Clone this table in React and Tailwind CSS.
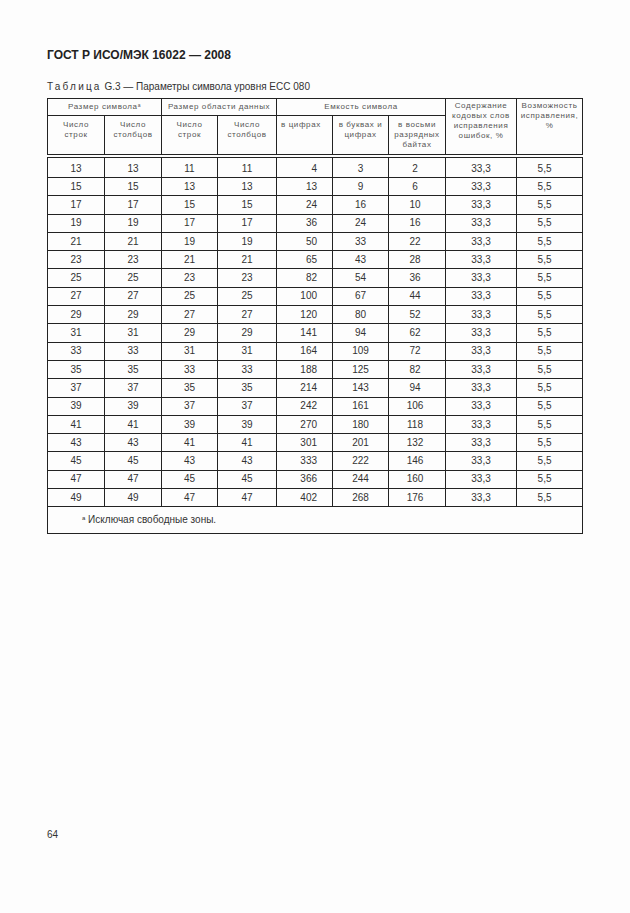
const rows = [
  [13, 11, 4, 3, 2],
  [15, 13, 13, 9, 6],
  [17, 15, 24, 16, 10],
  [19, 17, 36, 24, 16],
  [21, 19, 50, 33, 22],
  [23, 21, 65, 43, 28],
  [25, 23, 82, 54, 36],
  [27, 25, 100, 67, 44],
  [29, 27, 120, 80, 52],
  [31, 29, 141, 94, 62],
  [33, 31, 164, 109, 72],
  [35, 33, 188, 125, 82],
  [37, 35, 214, 143, 94],
  [39, 37, 242, 161, 106],
  [41, 39, 270, 180, 118],
  [43, 41, 301, 201, 132],
  [45, 43, 333, 222, 146],
  [47, 45, 366, 244, 160],
  [49, 47, 402, 268, 176],
]

const widths = [57, 57, 56, 59, 56, 56, 57, 71, 66]

const App = () => {
  return (
    <div
      className="min-h-[913px] w-[630px] bg-[#fdfdfd] pl-[47px] pt-[47px] text-[#333]"
      style={{ fontFamily: '"Liberation Sans", Arial, sans-serif' }}
    >
      {/* Document header */}
      <div className="text-[12px] font-bold leading-[16px] text-[#222]">ГОСТ Р ИСО/МЭК 16022 — 2008</div>

      <div className="mt-[18px] text-[10px] leading-[12px] text-[#333]">
        <span className="tracking-[2.2px]">Таблица</span>
        <span> G.3 — Параметры символа уровня ECC 080</span>
      </div>

      {/* Table */}
      <table className="mt-[5px] w-[535px] table-fixed border-collapse border border-[#222]">
        <colgroup>
          {widths.map((w, i) => (
            <col key={i} style={{ width: w }} />
          ))}
        </colgroup>
        <thead className="text-[8px] leading-[10px] tracking-[0.6px] text-[#555]">
          <tr className="h-[17px]">
            <th colSpan={2} className="border border-[#222] font-normal">
              Размер символа<sup className="text-[5px]">а</sup>
            </th>
            <th colSpan={2} className="border border-[#222] font-normal">Размер области данных</th>
            <th colSpan={3} className="border border-[#222] font-normal">Емкость символа</th>
            <th rowSpan={2} className="border border-b-[4px] border-double border-[#222] px-[3px] pt-[2px] align-top font-normal">
              Содержание кодовых слов исправления ошибок, %
            </th>
            <th rowSpan={2} className="border border-b-[4px] border-double border-[#222] px-[2px] pt-[2px] align-top font-normal">
              Возможность исправления, %
            </th>
          </tr>
          <tr className="h-[40px]">
            <th className="border border-b-[4px] border-double border-[#222] pt-[4px] align-top font-normal">Число<br />строк</th>
            <th className="border border-b-[4px] border-double border-[#222] pt-[4px] align-top font-normal">Число<br />столбцов</th>
            <th className="border border-b-[4px] border-double border-[#222] pt-[4px] align-top font-normal">Число<br />строк</th>
            <th className="border border-b-[4px] border-double border-[#222] pt-[4px] align-top font-normal">Число<br />столбцов</th>
            <th className="border border-b-[4px] border-double border-[#222] pl-[4px] pt-[4px] text-left align-top font-normal">в цифрах</th>
            <th className="border border-b-[4px] border-double border-[#222] px-[4px] pt-[4px] align-top font-normal">в буквах и<br />цифрах</th>
            <th className="border border-b-[4px] border-double border-[#222] px-[4px] pt-[4px] align-top font-normal">в восьми<br />разрядных<br />байтах</th>
          </tr>
        </thead>
        <tbody className="text-[10px] leading-[12px]">
          {rows.map(([n, d, c1, c2, c3], i) => {
            const pad = i === 0 ? ' pt-[4px]' : ''
            return (
              <tr key={n} className={i === 0 ? 'h-[22px]' : 'h-[18.3px]'}>
                <td className={'border border-[#222] text-center' + pad}>{n}</td>
                <td className={'border border-[#222] text-center' + pad}>{n}</td>
                <td className={'border border-[#222] text-center' + pad}>{d}</td>
                <td className={'border border-[#222] text-center' + pad}>{d}</td>
                <td className={'border border-[#222] pr-[15px] text-right' + pad}>{c1}</td>
                <td className={'border border-[#222] text-center' + pad}>{c2}</td>
                <td className={'border border-[#222] pr-[4px] text-center' + pad}>{c3}</td>
                <td className={'border border-[#222] text-center' + pad}>33,3</td>
                <td className={'border border-[#222] pr-[10px] text-center' + pad}>5,5</td>
              </tr>
            )
          })}
          <tr className="h-[27px]">
            <td colSpan={9} className="border border-[#222] pl-[34px] text-[10px]">
              <sup className="text-[6px]">а</sup> Исключая свободные зоны.
            </td>
          </tr>
        </tbody>
      </table>

      <div className="mt-[295px] text-[10px] leading-[12px] text-[#333]">64</div>
    </div>
  )
}

export default App
